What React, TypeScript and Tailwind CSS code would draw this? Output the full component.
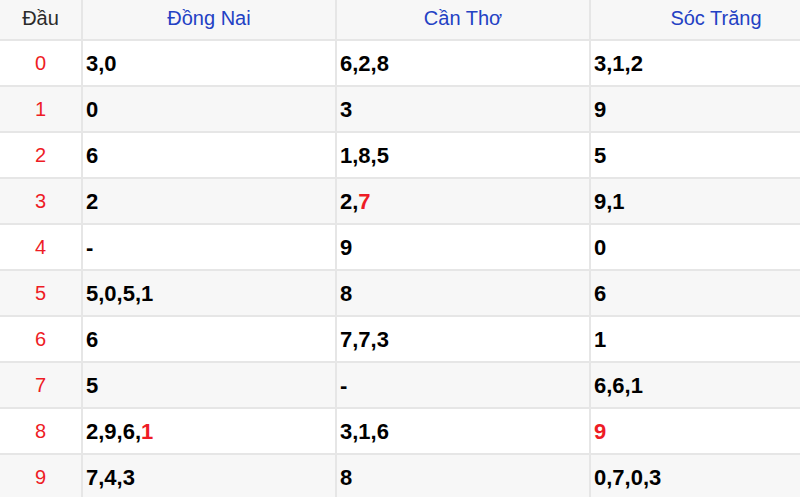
const rows: { d: string; a: (string | [string])[]; b: (string | [string])[]; c: (string | [string])[] }[] = [
  { d: "0", a: ["3,0"], b: ["6,2,8"], c: ["3,1,2"] },
  { d: "1", a: ["0"], b: ["3"], c: ["9"] },
  { d: "2", a: ["6"], b: ["1,8,5"], c: ["5"] },
  { d: "3", a: ["2"], b: ["2,", ["7"]], c: ["9,1"] },
  { d: "4", a: ["-"], b: ["9"], c: ["0"] },
  { d: "5", a: ["5,0,5,1"], b: ["8"], c: ["6"] },
  { d: "6", a: ["6"], b: ["7,7,3"], c: ["1"] },
  { d: "7", a: ["5"], b: ["-"], c: ["6,6,1"] },
  { d: "8", a: ["2,9,6,", ["1"]], b: ["3,1,6"], c: [["9"]] },
  { d: "9", a: ["7,4,3"], b: ["8"], c: ["0,7,0,3"] },
]

const Cell = ({ parts }: { parts: (string | [string])[] }) => (
  <td className="border-2 border-[#e6e6e6] pl-[3px] text-left font-bold text-[22px] text-black">
    {parts.map((p, i) =>
      typeof p === "string" ? <span key={i}>{p}</span> : <span key={i} className="text-[#ee1c25]">{p[0]}</span>
    )}
  </td>
)

export default function App() {
  return (
    <div className="w-[800px] h-[497px] overflow-hidden bg-white" style={{ fontFamily: "'Liberation Sans', Arial, sans-serif" }}>
      <table className="w-[843px] border-collapse -ml-[2px] -mt-[2px] table-fixed">
        <colgroup>
          <col className="w-[83px]" />
          <col className="w-[254px]" />
          <col className="w-[254px]" />
          <col className="w-[252px]" />
        </colgroup>
        <thead>
          <tr className="h-[41px] bg-[#f7f7f7] text-[20px]">
            <th className="border-2 border-[#e6e6e6] pb-[4px] font-normal text-[#2b2b2b]">Đầu</th>
            <th className="border-2 border-[#e6e6e6] pb-[4px] font-normal text-[#2341c4]">Đồng Nai</th>
            <th className="border-2 border-[#e6e6e6] pb-[4px] font-normal text-[#2341c4]">Cần Thơ</th>
            <th className="border-2 border-[#e6e6e6] pb-[4px] font-normal text-[#2341c4]">Sóc Trăng</th>
          </tr>
        </thead>
        <tbody>
          {rows.map((r, i) => (
            <tr key={r.d} className={`h-[46px] ${i % 2 === 1 ? "bg-[#f7f7f7]" : "bg-white"}`}>
              <td className="border-2 border-[#e6e6e6] text-center text-[20px] text-[#ee1c25]">{r.d}</td>
              <Cell parts={r.a} />
              <Cell parts={r.b} />
              <Cell parts={r.c} />
            </tr>
          ))}
        </tbody>
      </table>
    </div>
  )
}
